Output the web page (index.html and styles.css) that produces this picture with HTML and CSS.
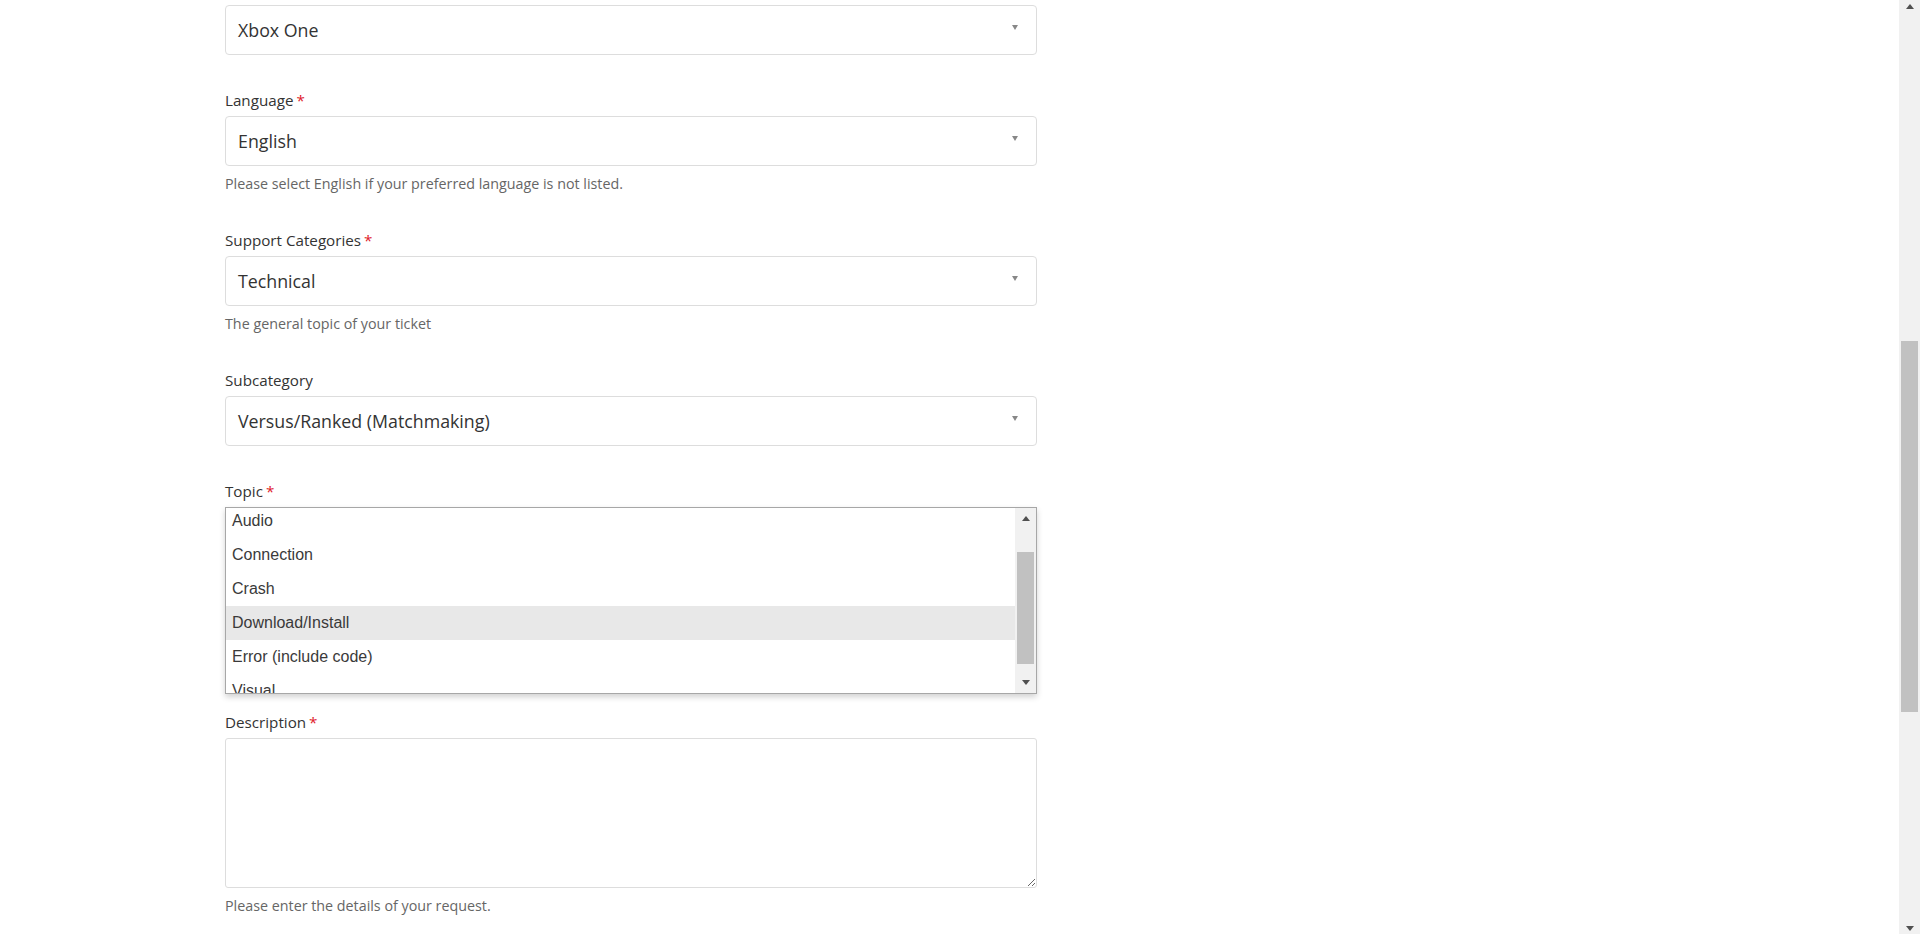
FILE: index.html
```html
<!DOCTYPE html>
<html lang="en">
<head>
<meta charset="utf-8">
<title>Submit a request</title>
<link rel="stylesheet" href="styles.css">
</head>
<body>
<div class="window">
  <main class="viewport">
    <form class="form">
      <div class="field">
        <div class="select"><span class="select-value">Xbox One</span><span class="caret"></span></div>
      </div>

      <div class="field">
        <label class="label">Language<span class="req">*</span></label>
        <div class="select"><span class="select-value">English</span><span class="caret"></span></div>
        <p class="help">Please select English if your preferred language is not listed.</p>
      </div>

      <div class="field">
        <label class="label">Support Categories<span class="req">*</span></label>
        <div class="select"><span class="select-value">Technical</span><span class="caret"></span></div>
        <p class="help">The general topic of your ticket</p>
      </div>

      <div class="field">
        <label class="label">Subcategory</label>
        <div class="select"><span class="select-value">Versus/Ranked (Matchmaking)</span><span class="caret"></span></div>
      </div>

      <div class="field field-topic">
        <label class="label">Topic<span class="req">*</span></label>
        <div class="topic-wrap">
          <div class="select"><span class="caret"></span></div>
          <div class="listbox">
            <ul class="options">
              <li class="option">Audio</li>
              <li class="option">Connection</li>
              <li class="option">Crash</li>
              <li class="option option-hover">Download/Install</li>
              <li class="option">Error (include code)</li>
              <li class="option">Visual</li>
            </ul>
            <div class="lb-scroll">
              <span class="lb-btn"><span class="arrow-up"></span></span>
              <span class="lb-track"><span class="lb-thumb"></span></span>
              <span class="lb-btn"><span class="arrow-down"></span></span>
            </div>
          </div>
        </div>
      </div>

      <div class="field">
        <label class="label">Description<span class="req">*</span></label>
        <textarea class="textarea"></textarea>
        <p class="help">Please enter the details of your request.</p>
      </div>
    </form>
  </main>
  <div class="page-scroll">
    <span class="ps-btn"><span class="arrow-up"></span></span>
    <span class="ps-track"><span class="ps-thumb"></span></span>
    <span class="ps-btn"><span class="arrow-down"></span></span>
  </div>
</div>
</body>
</html>
```

FILE: styles.css
```css
html, body {
  margin: 0;
  padding: 0;
  height: 100%;
  overflow: hidden;
  background: #fff;
}

.window {
  display: flex;
  height: 934px;
}

.viewport {
  flex: 1;
  overflow: hidden;
}

.form {
  width: 812px;
  margin: 0 0 0 225px;
  padding-top: 5px;
  font-family: "Open Sans", "Noto Sans", sans-serif;
  color: #333;
}

.field {
  display: flex;
  flex-direction: column;
  margin-bottom: 35px;
}

.label {
  font-size: 15.2px;
  line-height: 20px;
  color: #333;
  margin-bottom: 6px;
}

.req {
  color: #e0202a;
  margin-left: 3px;
}

.select {
  position: relative;
  box-sizing: border-box;
  height: 50px;
  border: 1px solid #ddd;
  border-radius: 4px;
  background: #fff;
  display: flex;
  align-items: center;
  padding-left: 12px;
}

.select-value {
  font-size: 17.8px;
  color: #333;
}

.caret {
  position: absolute;
  right: 18px;
  top: calc(50% - 5px);
  width: 0;
  height: 0;
  border-left: 3.5px solid transparent;
  border-right: 3.5px solid transparent;
  border-top: 5px solid #888;
}

.help {
  margin: 8px 0 1px;
  font-size: 14.3px;
  line-height: 20px;
  color: #666;
}

.topic-wrap {
  position: relative;
  height: 170px;
}

.listbox {
  position: absolute;
  left: 0;
  top: 0;
  width: 812px;
  height: 187px;
  box-sizing: border-box;
  border: 1px solid #a7a7a7;
  background: #fff;
  box-shadow: 0 3px 6px rgba(0, 0, 0, 0.18);
  display: flex;
  overflow: hidden;
}

.options {
  flex: 1;
  list-style: none;
  margin: -4px 0 0;
  padding: 0;
  font-family: "Liberation Sans", Arial, sans-serif;
  font-size: 16px;
  color: #3a3a3a;
}

.option {
  height: 34px;
  line-height: 34px;
  padding-left: 6px;
}

.option-hover {
  background: #e8e8e8;
}

.lb-scroll {
  width: 21px;
  background: #f1f1f1;
  display: flex;
  flex-direction: column;
}

.lb-btn {
  height: 21px;
  display: flex;
  align-items: center;
  justify-content: center;
}

.lb-track {
  flex: 1;
  display: flex;
  flex-direction: column;
  padding: 23px 2px 8px;
}

.lb-thumb {
  height: 112px;
  background: #c1c1c1;
}

.arrow-up,
.arrow-down {
  width: 0;
  height: 0;
  border-left: 4.5px solid transparent;
  border-right: 4.5px solid transparent;
}

.arrow-up {
  border-bottom: 5px solid #505050;
}

.arrow-down {
  border-top: 5px solid #505050;
}

.textarea {
  box-sizing: border-box;
  height: 150px;
  width: 100%;
  border: 1px solid #ddd;
  border-radius: 3px;
  resize: vertical;
  font-family: inherit;
  font-size: 14px;
  padding: 8px 12px;
  outline: none;
  margin: 0;
  display: block;
}

.page-scroll {
  width: 21px;
  background: #f1f1f1;
  display: flex;
  flex-direction: column;
}

.ps-btn {
  height: 12px;
  display: flex;
  align-items: center;
  justify-content: center;
}

.ps-track {
  flex: 1;
  display: flex;
  flex-direction: column;
  padding: 329px 2px 0;
}

.ps-thumb {
  height: 371px;
  background: #c1c1c1;
}
```
